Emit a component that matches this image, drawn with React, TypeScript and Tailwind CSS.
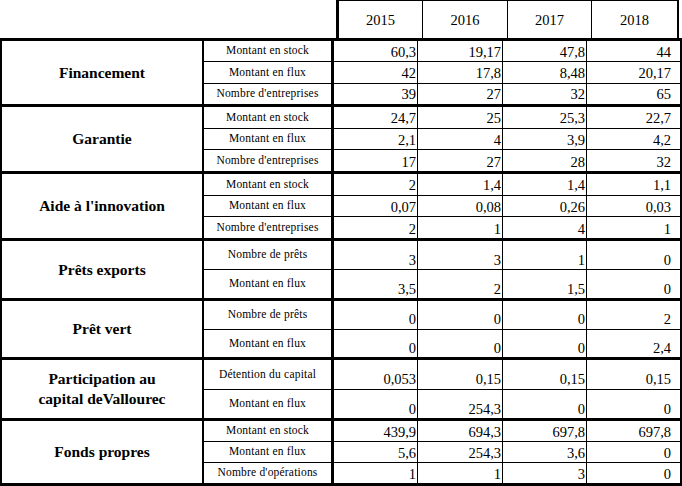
import React from "react";

type Row = { label: string; values: string[] };
type Group = { name: React.ReactNode; h: string; rows: Row[] };

const groups: Group[] = [
  {
    name: "Financement",
    h: "h-[63px]",
    rows: [
      { label: "Montant en stock", values: ["60,3", "19,17", "47,8", "44"] },
      { label: "Montant en flux", values: ["42", "17,8", "8,48", "20,17"] },
      { label: "Nombre d'entreprises", values: ["39", "27", "32", "65"] },
    ],
  },
  {
    name: "Garantie",
    h: "h-[64px]",
    rows: [
      { label: "Montant en stock", values: ["24,7", "25", "25,3", "22,7"] },
      { label: "Montant en flux", values: ["2,1", "4", "3,9", "4,2"] },
      { label: "Nombre d'entreprises", values: ["17", "27", "28", "32"] },
    ],
  },
  {
    name: "Aide à l'innovation",
    h: "h-[64px]",
    rows: [
      { label: "Montant en stock", values: ["2", "1,4", "1,4", "1,1"] },
      { label: "Montant en flux", values: ["0,07", "0,08", "0,26", "0,03"] },
      { label: "Nombre d'entreprises", values: ["2", "1", "4", "1"] },
    ],
  },
  {
    name: "Prêts exports",
    h: "h-[57px]",
    rows: [
      { label: "Nombre de prêts", values: ["3", "3", "1", "0"] },
      { label: "Montant en flux", values: ["3,5", "2", "1,5", "0"] },
    ],
  },
  {
    name: "Prêt vert",
    h: "h-[56px]",
    rows: [
      { label: "Nombre de prêts", values: ["0", "0", "0", "2"] },
      { label: "Montant en flux", values: ["0", "0", "0", "2,4"] },
    ],
  },
  {
    name: (
      <>
        Participation au
        <br />
        capital deVallourec
      </>
    ),
    h: "h-[58px]",
    rows: [
      { label: "Détention du capital", values: ["0,053", "0,15", "0,15", "0,15"] },
      { label: "Montant en flux", values: ["0", "254,3", "0", "0"] },
    ],
  },
  {
    name: "Fonds propres",
    h: "h-[62px]",
    rows: [
      { label: "Montant en stock", values: ["439,9", "694,3", "697,8", "697,8"] },
      { label: "Montant en flux", values: ["5,6", "254,3", "3,6", "0"] },
      { label: "Nombre d'opérations", values: ["1", "1", "3", "0"] },
    ],
  },
];

const colW = ["w-[84px]", "w-[85px]", "w-[84px]", "w-[85px]"];

export default function App() {
  return (
    <div className="w-[682px] h-[486px] bg-white text-black overflow-hidden font-['Liberation_Serif','DejaVu_Serif',serif]">
      {/* Header */}
      <div className="flex h-[38px]">
        <div className="w-[336px] shrink-0" />
        <div className="flex border-l-[3px] border-r-2 border-t border-black">
          {["2015", "2016", "2017", "2018"].map((y, i) => (
            <div
              key={y}
              className={`${colW[i]} ${i < 3 ? "border-r border-black" : ""} flex items-center justify-center text-[14.5px] leading-none pt-[2px]`}
            >
              {y}
            </div>
          ))}
        </div>
      </div>
      <div className="h-[3px] bg-black" />
      {groups.map((g, gi) => (
        <div key={gi}>
          <div className={`flex ${g.h} border-l-2 border-r-2 border-black`}>
            <div className="w-[202px] shrink-0 border-r-2 border-black flex items-center justify-center text-center font-bold text-[15.5px] leading-[20px]">
              <div>{g.name}</div>
            </div>
            <div className="flex-1 flex flex-col">
              {g.rows.map((r, ri) => (
                <div
                  key={ri}
                  className={`flex flex-1 ${ri < g.rows.length - 1 ? "border-b border-black" : ""}`}
                >
                  <div className="w-[130px] shrink-0 border-r-[3px] border-black flex items-center justify-center text-[11.5px] leading-none tracking-[0.2px]">
                    {r.label}
                  </div>
                  {r.values.map((v, vi) => (
                    <div
                      key={vi}
                      className={`${colW[vi]} ${vi < 3 ? "border-r border-black" : ""} flex items-end justify-end pr-[1px] pb-[2px] text-[14.5px] leading-none`}
                    >
                      {v}
                    </div>
                  ))}
                </div>
              ))}
            </div>
          </div>
          <div className="h-[3px] bg-black" />
        </div>
      ))}
    </div>
  );
}
